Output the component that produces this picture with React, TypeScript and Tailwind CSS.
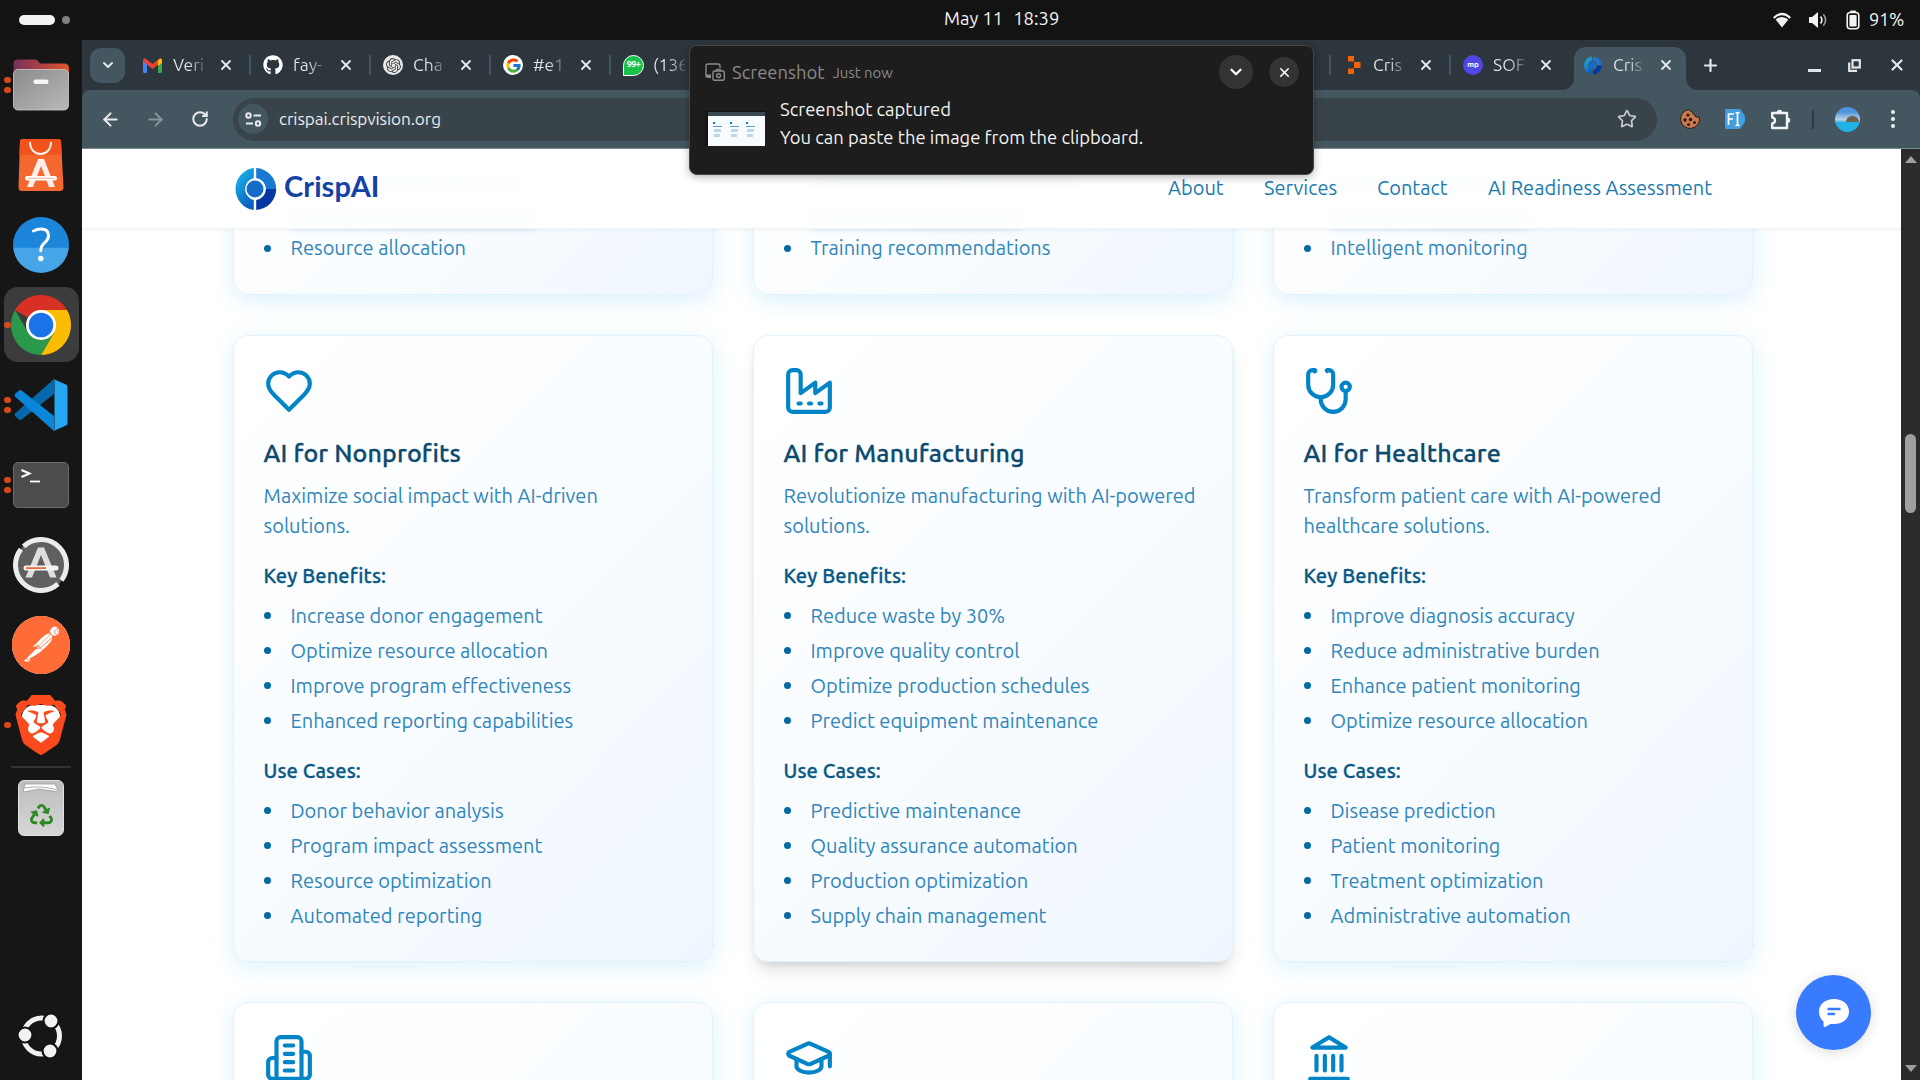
import React from "react";
import { FaGithub, FaRecycle } from "react-icons/fa";
import { FcGoogle } from "react-icons/fc";
import { SiBrave, SiOpenai, SiPostman } from "react-icons/si";
import { ArrowLeft, ArrowRight, ChevronDown, Plus, RotateCw, Star, X } from "lucide-react";

/* ---------- Desktop panel ---------- */

function TopBar() {
  return (
    <header className="relative flex h-10 shrink-0 items-center justify-between bg-[#131313] pr-[16px] pl-[19px] text-[#f2f2f2]">
      <div className="flex items-center gap-[7px]">
        <span className="h-[10px] w-9 rounded-full bg-[#f2f2f2]" />
        <span className="size-2 rounded-full bg-[#808080]" />
      </div>
      <span className="absolute top-[4px] left-[944px] flex gap-[10px] text-[18.400px] leading-7">
        <span>May 11</span>
        <span>18:39</span>
      </span>
      <div className="flex items-center">
        <svg className="mr-4 h-[18px] w-5" viewBox="0 0 20 18">
          <path d="M1 6.2Q10-2.5 19 6.2L17.6 7.7Q10 1 2.4 7.7Z" fill="#f2f2f2" />
          <path d="M3.6 8.4Q10 3.4 16.4 8.4L10 16.6Z" fill="#f2f2f2" />
        </svg>
        <svg className="mr-[19px] h-[18px] w-[19px]" viewBox="0 0 19 18">
          <path d="M1 6h3l6-5v16l-6-5H1Z" fill="#f2f2f2" />
          <path d="M12.5 5.5q2.8 3.5 0 7" fill="none" stroke="#f2f2f2" strokeWidth="1.6" />
          <path d="M15.3 3.2q4.6 5.8 0 11.6" fill="none" stroke="#9a9a9a" strokeWidth="1.6" />
        </svg>
        <svg className="mr-[9px] h-5 w-[14px]" viewBox="0 0 14 20">
          <rect x="1.2" y="2.5" width="11.6" height="16.3" rx="3" fill="none" stroke="#f2f2f2" strokeWidth="1.6" />
          <rect x="3.4" y="5" width="7.2" height="11.5" rx="1" fill="#f2f2f2" />
          <rect x="4" y="0.5" width="6" height="2" rx="1" fill="#f2f2f2" />
        </svg>
        <span className="text-[18.300px] tracking-[-0.300px]">91%</span>
      </div>
    </header>
  );
}

/* ---------- Dock ---------- */

const FilesIcon = () => (
  <svg width="56" height="52" viewBox="0 0 56 52">
    <defs>
      <linearGradient id="fold" x1="0" x2="1"><stop offset="0" stopColor="#77305a" /><stop offset="1" stopColor="#e0562b" /></linearGradient>
      <linearGradient id="drawer" x1="0" y1="0" x2="1" y2="1"><stop offset="0" stopColor="#8b8b8b" /><stop offset="1" stopColor="#b9b9b9" /></linearGradient>
    </defs>
    <path d="M0.5 20V4.5Q.5.5 4.5.5H22q2 0 3 1.5l2 2.5H51q5 0 5 5V20Z" fill="url(#fold)" />
    <rect x="0.5" y="10.5" width="55" height="40.5" rx="4.5" fill="url(#drawer)" stroke="#cdcdcd" strokeWidth="0.8" />
    <rect x="20.5" y="20.5" width="15" height="4.5" rx="2" fill="#f6f6f6" />
  </svg>
);

const SoftwareIcon = () => (
  <svg width="46" height="52" viewBox="0 0 46 52">
    <path d="M4.5 0H40q2.8 0 3 2.8L45.500 48q.1 4-3.500 4H4Q.4 52 .5 48L2 2.800Q2.200 0 4.500 0Z" fill="#f4682f" />
    <path d="M4.5 0H40q2.800 0 3 2.800L43.800 16H1.300L2 2.800Q2.200 0 4.500 0Z" fill="#f2521b" />
    <path d="M12 3C12 19 33 19 33 3" fill="none" stroke="#fff3ee" strokeWidth="2" />
    <path d="M20 20h6l11 28h-6l-8-21-8 21H9Z" fill="#fdeee7" />
    <rect x="7" y="37" width="32" height="4.500" rx="2.200" fill="#fff" />
    <rect x="10" y="38.700" width="26" height="1.300" fill="#f9c4ad" />
  </svg>
);

const HelpIcon = () => (
  <div className="flex size-14 items-center justify-center rounded-full bg-linear-to-b from-[#1b86da] from-54% to-[#45a5e6] to-56%">
    <svg width="20" height="36" viewBox="0 0 20 36">
      <path d="M2.500 4Q6 2 10 2q7.500 0 7.500 6.800 0 3.700-4 7-3.700 3-3.700 8" fill="none" stroke="#fff" strokeWidth="3" strokeLinecap="round" />
      <circle cx="9.800" cy="31.500" r="2.800" fill="#fff" />
    </svg>
  </div>
);

const ChromeIcon = () => (
  <svg width="60" height="60" viewBox="0 0 60 60">
    <path d="M30 30 4.020 15A30 30 0 0 1 55.980 15Z" fill="#d93025" />
    <path d="M30 15H55.980A30 30 0 0 1 30 60L43 37.500Z" fill="#fbbc04" />
    <path d="M17 37.500 4.020 15A30 30 0 0 0 30 60L43 37.500Z" fill="#2a9a4a" />
    <circle cx="30" cy="30" r="15" fill="#fff" />
    <circle cx="30" cy="30" r="12.300" fill="#1a73e8" />
  </svg>
);

const CodeIcon = () => (
  <svg width="54" height="54" viewBox="0 0 54 54">
    <path d="M40 1 1 35.500q-1 1.300 0 2.500l4 3.500q1.300 1 2.600 0L40 16Z" fill="#0768ac" />
    <path d="M40 53 1 18.500q-1-1.300 0-2.500l4-3.500q1.300-1 2.600 0L40 38Z" fill="#0a86d8" />
    <path d="M39.500 1 52 6.500q1.500.7 1.500 2.500V45q0 1.800-1.500 2.500L39.500 53Q40.500 52.500 40.500 50V4Q40.500 1.500 39.500 1Z" fill="#24a6f2" />
  </svg>
);

const TerminalIcon = () => (
  <div className="h-[46px] w-14 rounded-[5px] border border-[#6b6b6b] bg-[#4c4c4c]">
    <svg width="30" height="24" viewBox="0 0 30 24">
      <path d="M7.500 7l8 3.500-8 3.500" fill="none" stroke="#fff" strokeWidth="2" />
      <path d="M16 18.500H26" stroke="#fff" strokeWidth="1.800" />
    </svg>
  </div>
);

const UpdaterIcon = () => (
  <svg width="56" height="56" viewBox="0 0 56 56">
    <circle cx="28" cy="28" r="26" fill="#606060" />
    <circle cx="28" cy="28" r="25.500" fill="none" stroke="#ececec" strokeWidth="5" strokeDasharray="75 5.110" transform="rotate(-133 28 28)" />
    <path d="M25 10.500h6l12.500 30h-6.500L28 18l-9 22.500h-6.500Z" fill="#dedede" />
    <rect x="10.500" y="28.500" width="35" height="5" rx="2.500" fill="#f3f3f3" />
    <rect x="13" y="30.200" width="20" height="1.800" fill="#ea6a36" />
  </svg>
);

const PostmanIcon = () => (
  <div className="grid size-[58px] place-items-center rounded-full bg-white">
    <SiPostman className="size-[58px] text-[#ff6c37]" />
  </div>
);

const BraveIcon = () => (
  <div className="relative h-[60px] w-[60px]">
    <span className="absolute top-[10px] left-[11px] h-[38px] w-[38px] rounded-[12px] bg-white" />
    <SiBrave className="relative h-[60px] w-[60px] text-[#fb4a1d]" />
  </div>
);

const TrashIcon = () => (
  <div className="flex h-[56px] w-[46px] flex-col items-center rounded-[6px] border border-[#e2e2e2] bg-linear-to-b from-[#bdbdbd] to-[#d6d6d6]">
    <svg width="40" height="13" viewBox="0 0 40 13">
      <path d="M2 11 4 3h30l4 8-20-3Z" fill="#fff" stroke="#9a9a9a" strokeWidth="0.8" />
      <path d="M3 7q16-3 34 2" fill="none" stroke="#9a9a9a" strokeWidth="0.8" />
    </svg>
    <FaRecycle className="mt-[10px] size-[23px] text-[#2c8a25]" />
  </div>
);

const UbuntuIcon = () => (
  <svg width="46" height="46" viewBox="0 0 46 46">
    <circle cx="23.500" cy="23" r="18" fill="none" stroke="#f2f2f2" strokeWidth="5" />
    <g fill="#f2f2f2" stroke="#131313" strokeWidth="2.200">
      <circle cx="7" cy="22" r="7.500" />
      <circle cx="33" cy="8" r="7.500" />
      <circle cx="32" cy="38" r="7.500" />
    </g>
  </svg>
);

function DockItem({ dots = 0, active = false, children }: { dots?: number; active?: boolean; children: React.ReactNode }) {
  return (
    <div className="relative flex h-20 w-full items-center justify-center">
      {active && <span className="absolute top-[2px] left-1 size-[75px] rounded-[14px] bg-[#3c3c3c]" />}
      <span className="absolute left-1 flex flex-col gap-[3.500px]">
        {dots > 0 && <i className="size-[6.500px] rounded-full bg-[#d9491a]" />}
        {dots > 1 && <i className="size-[6.500px] rounded-full bg-[#d9491a]" />}
      </span>
      <span className="relative">{children}</span>
    </div>
  );
}

function Dock() {
  return (
    <nav className="flex w-[82px] shrink-0 flex-col items-center bg-[#161616] pt-[5px]">
      <DockItem dots={2}><FilesIcon /></DockItem>
      <DockItem><SoftwareIcon /></DockItem>
      <DockItem><HelpIcon /></DockItem>
      <DockItem dots={1} active><ChromeIcon /></DockItem>
      <DockItem dots={2}><CodeIcon /></DockItem>
      <DockItem dots={2}><TerminalIcon /></DockItem>
      <DockItem><UpdaterIcon /></DockItem>
      <DockItem><PostmanIcon /></DockItem>
      <DockItem dots={1}><BraveIcon /></DockItem>
      <span className="mt-[1px] h-[2px] w-[60px] bg-[#333]" />
      <DockItem><TrashIcon /></DockItem>
      <div className="mt-auto mb-[21px]"><UbuntuIcon /></div>
    </nav>
  );
}

/* ---------- Browser chrome ---------- */

const Gmail = () => (
  <svg width="19" height="15" viewBox="0 0 19 15">
    <path d="M0 2v11.500Q0 15 1.500 15H4V5Z" fill="#4285f4" />
    <path d="M19 2v11.500q0 1.500-1.500 1.500H15V5Z" fill="#34a853" />
    <path d="M0 2.500Q0 .3 2 .3L9.500 6 17 .3q2 0 2 2.200v1L9.500 11 0 3.500Z" fill="#ea4335" />
    <path d="M15 2.500 17 .5q2 0 2 2V5l-4 3Z" fill="#fbbc04" />
  </svg>
);

const CrispMark = ({ size }: { size: number }) => (
  <svg width={size} height={size} viewBox="0 0 44 44">
    <defs>
      <linearGradient id="cl" x1="0" y1="0" x2="0.500" y2="1"><stop offset="0" stopColor="#1cc0f2" /><stop offset="1" stopColor="#0c62c0" /></linearGradient>
    </defs>
    <path d="M20.800 1A21.200 21.200 0 0 0 20.800 43V33A11.300 11.300 0 0 1 20.800 11Z" fill="url(#cl)" />
    <path d="M23.200 1A21.200 21.200 0 0 1 43.200 22H33A11.300 11.300 0 0 0 23.200 11Z" fill="#1878d4" />
    <path d="M23.200 43A21.200 21.200 0 0 0 43.200 22H33A11.300 11.300 0 0 1 23.200 33Z" fill="#0636a4" />
    <circle cx="22" cy="22" r="8.500" fill="#146cc8" />
  </svg>
);

const Robot = () => (
  <svg className="ml-[4px]" width="14" height="18" viewBox="0 0 14 18">
    <path d="M1 0H7V5.500H1ZM7 6H13.500V12H7ZM1 12.500H7V18H1Z" fill="#f26207" />
  </svg>
);

const tabs: { title: string; icon: React.ReactNode; active?: boolean }[] = [
  { title: "Veri", icon: <Gmail /> },
  { title: "fay-", icon: <FaGithub className="size-5 text-white" /> },
  { title: "Cha", icon: <span className="grid size-5 place-items-center rounded-full bg-[#e9e9e9]"><SiOpenai className="size-[15px] text-[#444]" /></span> },
  { title: "#e1", icon: <span className="grid size-5 place-items-center rounded-full bg-white"><FcGoogle className="size-[17px]" /></span> },
  {
    title: "(136",
    icon: (
      <span className="grid size-[21px] place-items-center rounded-full rounded-bl-none border border-white bg-[#16c24b] text-[9px] font-bold tracking-[-0.500px] text-white">99+</span>
    ),
  },
  { title: "", icon: null },
  { title: "", icon: null },
  { title: "", icon: null },
  { title: "", icon: null },
  { title: "", icon: null },
  { title: "Cris", icon: <Robot /> },
  { title: "SOF", icon: <span className="grid size-5 place-items-center rounded-full bg-[#4f46e5] text-[8px] font-bold text-white">mp</span> },
  { title: "Cris", icon: <CrispMark size={19} />, active: true },
];

function TabStrip() {
  return (
    <div className="flex h-[50px] shrink-0 items-center bg-[#2c363c] pl-2 text-[#e3e6e8]">
      <span className="grid size-[35px] place-items-center rounded-[11px] bg-[#44565f]">
        <ChevronDown className="size-4" strokeWidth={3} />
      </span>
      <div className="ml-[5px] flex h-full">
        {tabs.map((t, i) => (
          <div
            key={i}
            className={
              t.active
                ? "relative z-10 ml-1 flex h-[43px] w-[112px] items-center self-end rounded-t-[12px] bg-[#44565f] pb-[7px] pl-[9px]"
                : "relative flex w-[120px] items-center pl-[13px]"
            }
          >
            {t.active && (
              <>
                <svg className="absolute bottom-0 -left-3" width="12" height="12"><path d="M0 12A12 12 0 0 0 12 0V12Z" fill="#44565f" /></svg>
                <svg className="absolute -right-3 bottom-0" width="12" height="12"><path d="M12 12A12 12 0 0 1 0 0V12Z" fill="#44565f" /></svg>
              </>
            )}
            {t.icon && (
              <>
                <span className="flex w-[21px] shrink-0 items-center">{t.icon}</span>
                <span className="ml-[9px] w-[32px] shrink-0 overflow-hidden bg-linear-to-r from-[#e3e6e8] from-50% to-[#4b585f] bg-clip-text text-[17.500px] leading-6 whitespace-nowrap text-transparent">
                  {t.title}
                </span>
                <X className="ml-[13px] size-4 shrink-0" strokeWidth={2.800} />
              </>
            )}
            {i < 11 && <span className="absolute right-[-1px] h-5 w-[2px] bg-[#44565f]" />}
          </div>
        ))}
      </div>
      <Plus className="ml-[15px] size-[19px]" strokeWidth={2.800} />
      <div className="mr-[14px] ml-auto flex items-center gap-[27px]">
        <span className="mt-[10px] h-[3px] w-[13px] bg-[#e3e6e8]" />
        <svg width="13" height="13" viewBox="0 0 13 13" fill="none" stroke="#e3e6e8" strokeWidth="2.200">
          <rect x="4.500" y="1.200" width="7.300" height="7.300" />
          <path d="M1.200 3.500V11.800H9" />
        </svg>
        <X className="size-[18px]" strokeWidth={3} />
      </div>
    </div>
  );
}

function Toolbar() {
  return (
    <div className="bg-[#2c363c]">
      <div className="flex h-[59px] shrink-0 items-center rounded-t-[8px] border-b border-[#7b8990] bg-[#44565f] pl-[18px] text-[#e8eaeb]">
        <ArrowLeft className="size-[21px]" strokeWidth={2.400} />
        <ArrowRight className="ml-[24px] size-[21px] text-[#87939a]" strokeWidth={2.400} />
        <RotateCw className="ml-[25px] size-[18px]" strokeWidth={2.700} />
        <div className="ml-[24px] flex h-[43px] w-[1424px] items-center rounded-full bg-[#38444a] pr-[20px] pl-[5px]">
          <span className="grid size-[30px] place-items-center rounded-full bg-[#44565f]">
            <svg width="17" height="15" viewBox="0 0 17 15" fill="none" stroke="#e8eaeb" strokeWidth="2">
              <circle cx="3.500" cy="3.500" r="2.200" /><path d="M8.500 3.500H16M1 11.500H8" /><circle cx="13" cy="11.500" r="2.200" />
            </svg>
          </span>
          <span className="ml-[11px] text-[17.200px] tracking-[-0.100px]">crispai.crispvision.org</span>
          <Star className="ml-auto size-[20px] text-[#c8cdd0]" strokeWidth={2} />
        </div>
        <div className="ml-[23px] flex flex-1 items-center">
          <svg width="20" height="20" viewBox="0 0 20 20">
            <path d="M9 .5q1 2 3 2 0 2.500 2.500 3 0 2.500 2.500 2.500l2.500.5A9.500 9.500 0 1 1 9 .5Z" fill="#c9794e" stroke="#2b1b14" strokeWidth="1" />
            <g fill="#2a1610"><circle cx="8" cy="6" r="1.600" /><circle cx="5" cy="11" r="1.700" /><circle cx="10.500" cy="10.500" r="1.700" /><circle cx="8.500" cy="15.500" r="1.500" /><circle cx="14.500" cy="13.500" r="1.500" /></g>
          </svg>
          <svg className="ml-[25px]" width="20" height="20" viewBox="0 0 20 20">
            <path d="M1 0H15l5 7v6l-5 7H1q-1 0-1-1V1Q0 0 1 0Z" fill="#429fdf" />
            <path d="M3.500 16V5H9M3.500 10H8M10.500 3.500q2 0 2 1.500v10q0 1.500-2 1.500M14.500 3.500q-2 0-2 1.500M14.500 16.500q-2 0-2-1.500" fill="none" stroke="#fff" strokeWidth="1.700" />
          </svg>
          <svg className="ml-[25px]" width="21" height="21" viewBox="0 0 21 21">
            <path d="M2.200 4H17V8.500M17 13.500V19H2.200V14.500Q5 14 5 11.500T2.200 8.500V4H17V19" fill="none" stroke="#f0f2f3" strokeWidth="2.400" strokeLinejoin="round" />
            <path d="M6.800 3.500a2.700 2.700 0 0 1 5.400 0ZM17.500 8.500a2.700 2.700 0 0 1 0 5.400Z" fill="#f0f2f3" />
          </svg>
          <span className="ml-[21px] h-[19px] w-[2px] bg-[#2f3b41]" />
          <span className="relative ml-[21px] size-[25px] overflow-hidden rounded-full bg-linear-to-b from-[#4c94dc] from-20% via-[#b7d2e6] via-50% to-[#1fb2e4] to-62%">
            <i className="absolute top-[9px] right-[1px] h-[6px] w-[13px] rounded-t-full bg-[#6e6048]" />
          </span>
          <span className="ml-[31px] flex flex-col gap-[3px]">
            <i className="size-1 rounded-full bg-[#f0f2f3]" /><i className="size-1 rounded-full bg-[#f0f2f3]" /><i className="size-1 rounded-full bg-[#f0f2f3]" />
          </span>
        </div>
      </div>
    </div>
  );
}

/* ---------- Web page ---------- */

const Icon = ({ children }: { children: React.ReactNode }) => (
  <svg className="mb-5 size-[50px]" viewBox="0 0 24 24" fill="none" stroke="#0284c7" strokeWidth="2" strokeLinecap="round" strokeLinejoin="round">
    {children}
  </svg>
);

const HeartGlyph = <path d="M19 14c1.490-1.460 3-3.210 3-5.500A5.500 5.500 0 0 0 16.500 3c-1.760 0-3 .5-4.500 2-1.500-1.500-2.740-2-4.500-2A5.500 5.500 0 0 0 2 8.500c0 2.300 1.500 4.050 3 5.500l7 7Z" />;
const FactoryGlyph = (
  <>
    <path d="M2 20a2 2 0 0 0 2 2h16a2 2 0 0 0 2-2V8l-7 5V8l-7 5V4a2 2 0 0 0-2-2H4a2 2 0 0 0-2 2Z" />
    <path d="M17 18h1M12 18h1M7 18h1" />
  </>
);
const StethoscopeGlyph = (
  <>
    <path d="M4.800 2.300A.3.3 0 1 0 5 2H4a2 2 0 0 0-2 2v5a6 6 0 0 0 6 6 6 6 0 0 0 6-6V4a2 2 0 0 0-2-2h-1a.2.2 0 1 0 .3.3" />
    <path d="M8 15v1a6 6 0 0 0 6 6 6 6 0 0 0 6-6v-4" />
    <circle cx="20" cy="10" r="2" />
  </>
);
const BuildingGlyph = (
  <>
    <path d="M6 22V4a2 2 0 0 1 2-2h8a2 2 0 0 1 2 2v18Z" />
    <path d="M6 12H4a2 2 0 0 0-2 2v6a2 2 0 0 0 2 2h2M18 9h2a2 2 0 0 1 2 2v9a2 2 0 0 1-2 2h-2M10 6h4M10 10h4M10 14h4M10 18h4" />
  </>
);
const CapGlyph = (
  <>
    <path d="M21.420 10.922a1 1 0 0 0-.019-1.838L12.830 5.180a2 2 0 0 0-1.660 0L2.600 9.080a1 1 0 0 0 0 1.832l8.570 3.908a2 2 0 0 0 1.660 0z" />
    <path d="M22 10v6M6 12.500V16a6 3 0 0 0 12 0v-3.500" />
  </>
);
const LandmarkGlyph = (
  <>
    <path d="M3 22H21M6 18V11M10 18V11M14 18V11M18 18V11" />
    <path d="M12 2 20 7H4Z" />
  </>
);

const cardBase = "rounded-[15px] border border-[#e0f2fe] bg-linear-135 from-white via-[#f8fcff] to-[#eff6ff] px-[29.500px]";
const blueShadow = "shadow-[0_5px_25px_rgba(14,165,233,0.15)]";
const grayShadow = "shadow-[0_12px_19px_-4px_rgba(0,0,0,0.12),0_5px_8px_-4px_rgba(0,0,0,0.12)]";

function Bullets({ items }: { items: string[] }) {
  return (
    <ul className="flex flex-col gap-[5px]">
      {items.map((s) => (
        <li key={s} className="flex h-[30px] items-center text-[20px] whitespace-nowrap text-[#2f86bb]">
          <span className="mr-[20px] size-[7px] rounded-full bg-[#0369a1]" />
          {s}
        </li>
      ))}
    </ul>
  );
}

const solutions = [
  {
    title: "AI for Nonprofits",
    icon: HeartGlyph,
    lines: ["Maximize social impact with AI-driven", "solutions."],
    benefits: ["Increase donor engagement", "Optimize resource allocation", "Improve program effectiveness", "Enhanced reporting capabilities"],
    cases: ["Donor behavior analysis", "Program impact assessment", "Resource optimization", "Automated reporting"],
  },
  {
    title: "AI for Manufacturing",
    icon: FactoryGlyph,
    hovered: true,
    lines: ["Revolutionize manufacturing with AI-powered", "solutions."],
    benefits: ["Reduce waste by 30%", "Improve quality control", "Optimize production schedules", "Predict equipment maintenance"],
    cases: ["Predictive maintenance", "Quality assurance automation", "Production optimization", "Supply chain management"],
  },
  {
    title: "AI for Healthcare",
    icon: StethoscopeGlyph,
    lines: ["Transform patient care with AI-powered", "healthcare solutions."],
    benefits: ["Improve diagnosis accuracy", "Reduce administrative burden", "Enhance patient monitoring", "Optimize resource allocation"],
    cases: ["Disease prediction", "Patient monitoring", "Treatment optimization", "Administrative automation"],
  },
];

const subheading = "mb-[10px] text-[20px] leading-[30px] font-medium tracking-[0.130px] text-[#075985] [-webkit-text-stroke:0.3px]";

function SolutionCard({ s }: { s: (typeof solutions)[number] }) {
  return (
    <article className={`${cardBase} h-[627px] pt-[30px] ${s.hovered ? grayShadow : blueShadow}`}>
      <Icon>{s.icon}</Icon>
      <h3 className="text-[25px] leading-[35px] font-medium tracking-[0.140px] whitespace-nowrap text-[#0c4a6e] [-webkit-text-stroke:0.3px]">{s.title}</h3>
      <p className="mt-[9.500px] mb-5 text-[20px] leading-[30px] whitespace-nowrap text-[#2f86bb]">
        {s.lines[0]}
        <br />
        {s.lines[1]}
      </p>
      <h4 className={subheading}>Key Benefits:</h4>
      <Bullets items={s.benefits} />
      <h4 className={`mt-5 ${subheading}`}>Use Cases:</h4>
      <Bullets items={s.cases} />
    </article>
  );
}

const previous = [
  { item: "Resource allocation", ghosts: ["w-[230px]", "w-[245px]"] },
  { item: "Training recommendations", ghosts: ["w-[265px]", "w-[210px]"] },
  { item: "Intelligent monitoring", ghosts: ["w-[255px]", "w-[200px]"] },
];

function SiteHeader() {
  return (
    <div className="relative z-10 flex h-20 items-center border-b border-[#f3f4f6] bg-white/95 pl-[151px] shadow-[0_1px_3px_rgba(0,0,0,0.05)]">
      <CrispMark size={44} />
      <span className="mb-[5px] ml-[7px] font-[Lato] text-[29px] font-bold tracking-[0.100px] text-[#1541a6]">CrispAI</span>
      <div className="absolute top-[24px] left-[1086px] flex text-[20px] leading-[30px] whitespace-nowrap text-[#1b7aae]">
        <span className="w-[96px]">About</span>
        <span className="w-[113px]">Services</span>
        <span className="w-[111px]">Contact</span>
        <span>AI Readiness Assessment</span>
      </div>
    </div>
  );
}

function Page() {
  return (
    <div className="relative min-h-0 flex-1 overflow-hidden bg-white">
      <SiteHeader />
      <main className="-mt-20 ml-[151px] grid w-[1520px] grid-cols-3 gap-10">
        {previous.map((p) => (
          <article key={p.item} className={`${cardBase} ${blueShadow} h-[146px] rounded-t-none pt-[18px]`}>
            {p.ghosts.map((g) => (
              <div key={g} className="mb-[5px] flex h-[30px] items-center pl-[27px]">
                <span className={`${g} h-3 rounded bg-[#2f86bb]/60 blur-[6px]`} />
              </div>
            ))}
            <div className="-mt-[5px]"><Bullets items={[p.item]} /></div>
          </article>
        ))}
        {solutions.map((s) => <SolutionCard key={s.title} s={s} />)}
        {[BuildingGlyph, CapGlyph, LandmarkGlyph].map((g, i) => (
          <article key={i} className={`${cardBase} ${blueShadow} h-[627px] pt-[30px]`}>
            <Icon>{g}</Icon>
          </article>
        ))}
      </main>
      <button className="absolute right-[30px] bottom-[30px] grid size-[75px] place-items-center rounded-full bg-[#387bff] shadow-[0_2px_14px_rgba(0,0,0,0.14)]">
        <svg width="30" height="28" viewBox="0 0 30 28">
          <path d="M15 0C23.500 0 30 5 30 12.500S23.500 25 15 25H11.500L6 28Q4.500 28 4.500 26.500V22.500Q0 19 0 12.500C0 5 6.500 0 15 0Z" fill="#fff" />
          <path d="M8.500 10H21.500M8.500 15H16" stroke="#387bff" strokeWidth="2.600" />
        </svg>
      </button>
    </div>
  );
}

function Scrollbar() {
  return (
    <div className="flex w-[19px] shrink-0 flex-col items-center bg-[#2b2b2b] pt-[7px] pb-[8px]">
      <svg width="12" height="7"><path d="M0 7 6 0 12 7Z" fill="#9f9f9f" /></svg>
      <span className="mt-[271px] h-[79px] w-[11px] rounded-full bg-[#9f9f9f]" />
      <svg className="mt-auto" width="12" height="7"><path d="M0 0 6 7 12 0Z" fill="#9f9f9f" /></svg>
    </div>
  );
}

/* ---------- Notification ---------- */

function Thumbnail() {
  return (
    <div className="flex h-[35px] w-[60px] flex-col bg-[#131313] pt-[1px] pl-[3px]">
      <div className="h-[4px] bg-[#3a4a52]" />
      <div className="grid flex-1 grid-cols-3 gap-[3px] bg-[#f8fcff] px-[5px] pt-[6px]">
        {[0, 1, 2].map((i) => (
          <div key={i} className="flex flex-col gap-[2px]">
            <i className="h-[2px] w-[2px] bg-[#0284c7]" />
            <i className="h-[1px] w-[9px] bg-[#5f9bc0]" />
            <i className="ml-[1px] h-[3px] w-[7px] bg-[#b9d8ea]" />
            <i className="ml-[1px] h-[3px] w-[6px] bg-[#b9d8ea]" />
          </div>
        ))}
      </div>
    </div>
  );
}

function Notification() {
  return (
    <section className="absolute top-[45px] left-[689px] z-20 h-[130px] w-[625px] rounded-[8px] border border-[#454545] bg-[#1d1d1d] px-[15px] pt-[9px] shadow-[0_2px_8px_rgba(0,0,0,0.3)]">
      <div className="flex h-[34px] items-center text-[#8a8a8a]">
        <svg width="20" height="18" viewBox="0 0 20 18" fill="none" stroke="#8a8a8a" strokeWidth="1.400">
          <path d="M6 13.500H1V3Q1 1 3 1H13Q15 1 15 3V5" />
          <path d="M1 11.500H6V15H3Q1 15 1 13Z" fill="#8a8a8a" stroke="none" />
          <rect x="8" y="8" width="11.300" height="9.300" rx="1.500" /><circle cx="13.600" cy="12.600" r="1.900" /><path d="M11 8 12 6.500H15L16 8" />
        </svg>
        <span className="mt-[1px] ml-[7px] text-[18.400px]">Screenshot</span>
        <span className="mt-[2px] ml-[8px] text-[14.900px]">Just now</span>
        <span className="ml-auto grid size-[34px] place-items-center rounded-full bg-[#343434] text-white"><ChevronDown className="size-[18px]" strokeWidth={3} /></span>
        <span className="mr-[-1px] ml-[16px] grid size-[30px] place-items-center rounded-full bg-[#343434] text-white"><X className="size-[15px]" strokeWidth={2.500} /></span>
      </div>
      <div className="mt-[6px] flex text-[18.400px] leading-7 text-[#f2f2f2]">
        <div className="mt-[16px] mr-[15px]"><Thumbnail /></div>
        <div className="whitespace-nowrap">
          <p>Screenshot captured</p>
          <p>You can paste the image from the clipboard.</p>
        </div>
      </div>
    </section>
  );
}

export default function App() {
  return (
    <div className="relative flex h-[1080px] w-[1920px] flex-col overflow-hidden bg-[#131313] font-['Ubuntu','Noto_Sans',sans-serif]">
      <TopBar />
      <div className="flex min-h-0 flex-1">
        <Dock />
        <div className="flex min-w-0 flex-1 flex-col">
          <TabStrip />
          <Toolbar />
          <div className="flex min-h-0 flex-1">
            <Page />
            <Scrollbar />
          </div>
        </div>
      </div>
      <Notification />
    </div>
  );
}
